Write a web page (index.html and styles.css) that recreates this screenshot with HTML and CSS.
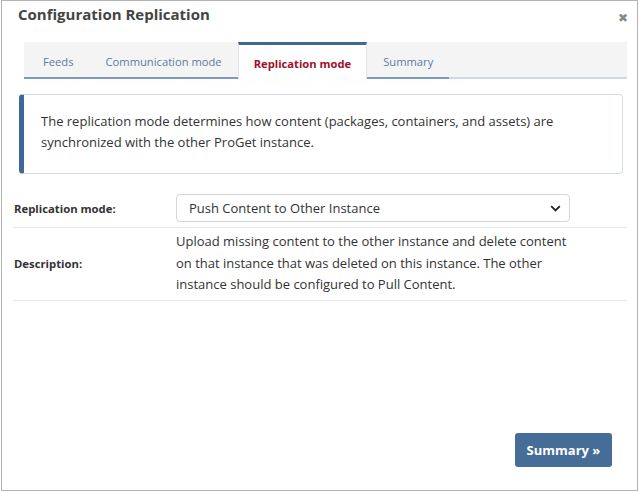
FILE: index.html
```html
<!DOCTYPE html>
<html>
<head>
<meta charset="utf-8">
<link rel="stylesheet" href="styles.css">
</head>
<body>
<div class="dialog">
  <div class="header">
    <h1 class="title">Configuration Replication</h1>
    <span class="close">&#x2716;</span>
  </div>
  <div class="tabs">
    <div class="tab first">Feeds</div>
    <div class="tab">Communication mode</div>
    <div class="tab active">Replication mode</div>
    <div class="tab">Summary</div>
    <div class="tab-fill"></div>
  </div>
  <div class="info">
    The replication mode determines how content (packages, containers, and assets) are synchronized with the other ProGet instance.
  </div>
  <div class="form">
    <div class="row">
      <div class="label">Replication mode:</div>
      <div class="field">
        <div class="select">
          <span>Push Content to Other Instance</span>
          <svg class="chev" width="11" height="7" viewBox="0 0 11 7"><path d="M1.2 1.2 L5.5 5.4 L9.8 1.2" fill="none" stroke="#222" stroke-width="1.8"/></svg>
        </div>
      </div>
    </div>
    <div class="row">
      <div class="label">Description:</div>
      <div class="field desc">Upload missing content to the other instance and delete content on that instance that was deleted on this instance. The other instance should be configured to Pull Content.</div>
    </div>
  </div>
  <div class="spacer"></div>
  <div class="footer">
    <button class="btn">Summary &raquo;</button>
  </div>
</div>
</body>
</html>
```

FILE: styles.css
```css
html, body {
  margin: 0;
  padding: 0;
  background: #fff;
}
body {
  font-family: "Open Sans", "Noto Sans", sans-serif;
  color: #333;
}
.dialog {
  box-sizing: border-box;
  margin-left: 1px;
  width: 637px;
  height: 491px;
  border: 1px solid #b4b4b4;
  display: flex;
  flex-direction: column;
}
.header {
  display: flex;
  justify-content: space-between;
  align-items: flex-start;
  padding: 3px 9px 0 16px;
  height: 37px;
  box-sizing: border-box;
}
.title {
  margin: 0;
  font-size: 15px;
  font-weight: bold;
  color: #444;
}
.close {
  font-size: 12px;
  color: #888;
  margin-top: 5px;
}
.tabs {
  display: flex;
  margin: 4px 10px 0 22px;
  background: #f4f4f4;
  height: 37px;
}
.tab {
  box-sizing: border-box;
  padding: 3px 16px 0;
  font-size: 11.2px;
  color: #5a7ca3;
  display: flex;
  align-items: center;
  border-bottom: 2px solid #7f9bbb;
}
.tab.first {
  padding-left: 19px;
}
.tab.active {
  background: #fff;
  color: #a0102a;
  font-weight: bold;
  border-top: 3px solid #3f6899;
  border-bottom: none;
  border-left: 1px solid #e4e4e4;
  border-right: 1px solid #e4e4e4;
  padding: 2px 15px 0 15px;
}
.tab-fill {
  flex: 1;
  border-bottom: 2px solid #d2d8df;
}
.info {
  margin: 15px 14px 0 17px;
  border: 1px solid #d2dde9;
  border-left: 5px solid #3f6899;
  border-radius: 4px;
  padding: 16px 20px 20px 17px;
  font-size: 13px;
  line-height: 21px;
  color: #333;
}
.form {
  margin: 19px 10px 0 11px;
}
.row {
  display: flex;
  align-items: center;
  border-bottom: 1px solid #e6e6e6;
}
.label {
  width: 162px;
  padding-left: 1px;
  flex: none;
  font-size: 11.3px;
  font-weight: bold;
  color: #333;
}
.field {
  flex: none;
  width: 394px;
  font-size: 13px;
}
.row:first-child {
  padding: 1px 0 5px;
}
.select {
  box-sizing: border-box;
  height: 28px;
  border: 1px solid #d6d6d6;
  border-radius: 4px;
  display: flex;
  align-items: center;
  justify-content: space-between;
  padding: 0 8px 0 12px;
  color: #333;
}
.chev {
  display: block;
}
.desc {
  line-height: 21.5px;
  padding: 3px 0 4px 0;
  color: #333;
}
.spacer {
  flex: 1;
}
.footer {
  display: flex;
  justify-content: flex-end;
  padding: 0 25px 23px 0;
}
.btn {
  font-family: "Open Sans", "Noto Sans", sans-serif;
  background: #466c98;
  color: #fff;
  border: none;
  border-radius: 3px;
  font-size: 13px;
  font-weight: bold;
  width: 97px;
  height: 34px;
  padding: 0;
}
```
